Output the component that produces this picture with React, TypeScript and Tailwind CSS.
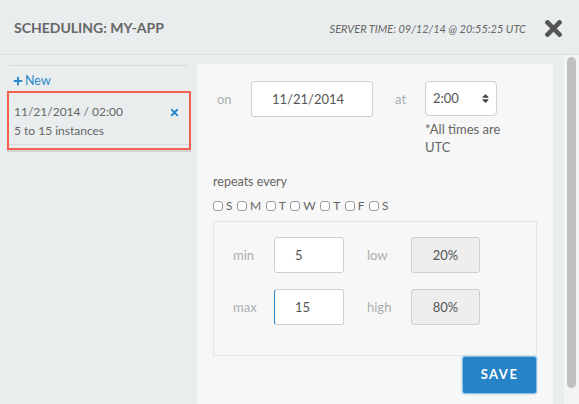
import React from 'react';
import { FaTimes, FaPlus, FaSort } from 'react-icons/fa';

const days = ['S', 'M', 'T', 'W', 'T', 'F', 'S'];

const Label: React.FC<{ text: string; className: string }> = ({ text, className }) => (
  <div className={`text-[13px] leading-[36px] text-[#a9aeb0] ${className}`}>{text}</div>
);

export default function App() {
  return (
    <div className="w-[579px] h-[404px] overflow-hidden bg-[#e9edee] flex flex-col font-['Lato',sans-serif]">
      {/* header */}
      <div className="h-[55px] shrink-0 border-b border-[#dce1e2] flex items-center pl-[14px] pr-[13px]">
        <div className="text-[14px] font-bold text-[#666] mt-[1px]">SCHEDULING: MY-APP</div>
        <div className="ml-auto text-[11px] italic text-[#666] mt-[4px]">SERVER TIME: 09/12/14 @ 20:55:25 UTC</div>
        <FaTimes size={25} className="ml-[15px] text-[#555] mt-[2px]" />
      </div>

      <div className="flex flex-1 min-h-0">
        {/* sidebar */}
        <div className="w-[197px] shrink-0 pt-[10px] pl-[7px] pr-[6px]">
          <div className="ml-[2px] mr-[4px] border-t border-[#d6dcdd]" />
          <div className="h-[25px] flex items-center pt-[5px] pl-[6px] text-[12.5px] text-[#2a87c9]">
            <FaPlus size={10} className="mr-[2px]" />
            New
          </div>
          <div className="border-2 border-[#f2604f] shadow-[0_2px_0_#cfd5d6] pb-[3px]">
            <div className="border-b border-[#d6dcdd] pt-[9px] pb-[4px] pl-[5px] pr-[9px] text-[12px] leading-[19px] text-[#666] relative">
              <div>11/21/2014 / 02:00</div>
              <div>5 to 15 instances</div>
              <FaTimes size={11} className="absolute right-[9px] top-[14px] text-[#2a87c9]" />
            </div>
          </div>
        </div>

        {/* panel */}
        <div className="w-[356px] shrink-0 mt-[9px] bg-[#f7f7f7] px-[16px] pt-[17px]">
          <div className="flex items-start">
            <Label text="on" className="w-[38px] pl-[4px]" />
            <div className="w-[122px] h-[36px] rounded-[3px] border border-[#cfcfcf] bg-white pl-[20px] text-[13px] leading-[34px] text-[#555]">
              11/21/2014
            </div>
            <Label text="at" className="w-[52px] pl-[22px]" />
            <div className="w-[72px]">
              <div className="h-[35px] rounded-[4px] border border-[#cfcfcf] bg-white pl-[7px] pr-[5px] flex items-center text-[13px] text-[#555]">
                2:00
                <FaSort size={11} className="ml-auto text-[#444]" />
              </div>
              <div className="mt-[4px] text-[13px] leading-[18px] text-[#666] whitespace-nowrap">
                *All times are
                <br />
                UTC
              </div>
            </div>
          </div>

          <div className="mt-[17px] text-[12.5px] leading-[18px] text-[#666]">repeats every</div>
          <div className="mt-[6px] flex items-center text-[12px] text-[#666]">
            {days.map((d, i) => (
              <div key={i} className="flex items-center mr-[4.5px]">
                <span className="w-[10px] h-[10px] rounded-[3px] border border-[#999] bg-white mr-[3px]" />
                {d}
              </div>
            ))}
          </div>

          <div className="mt-[6px] h-[135px] border border-[#e5e5e5] pl-[19px] pt-[15px]">
            <div className="flex">
              <Label text="min" className="w-[41px]" />
              <div className="w-[70px] h-[36px] rounded-[3px] border border-[#cfcfcf] bg-white pl-[20px] text-[13px] leading-[34px] text-[#555]">5</div>
              <Label text="low" className="w-[67px] pl-[23px]" />
              <div className="w-[69px] h-[36px] rounded-[3px] border border-[#cfcfcf] bg-[#eeeeee] text-center text-[13px] leading-[34px] text-[#555]">20%</div>
            </div>
            <div className="flex mt-[16px]">
              <Label text="max" className="w-[41px]" />
              <div className="w-[70px] h-[36px] rounded-[3px] border border-[#cfcfcf] border-l-[#2a87c9] bg-white pl-[20px] text-[13px] leading-[34px] text-[#555]">15</div>
              <Label text="high" className="w-[67px] pl-[23px]" />
              <div className="w-[69px] h-[36px] rounded-[3px] border border-[#cfcfcf] bg-[#eeeeee] text-center text-[13px] leading-[34px] text-[#555]">80%</div>
            </div>
          </div>

          <div className="flex justify-end">
            <button className="w-[75px] h-[38px] rounded-[3px] bg-[#2583c6] border border-[#8cc0e8] shadow-[0_0_2px_#8cc0e8] text-white text-[13px] font-bold tracking-[1.5px]">
              SAVE
            </button>
          </div>
        </div>

        {/* scrollbar */}
        <div className="ml-[11px] w-[15px] bg-[#f3f4f4] pt-[2px] pl-[3px]">
          <div className="w-[9px] h-[331px] rounded-full bg-[#c1c1c1]" />
        </div>
      </div>
    </div>
  );
}
